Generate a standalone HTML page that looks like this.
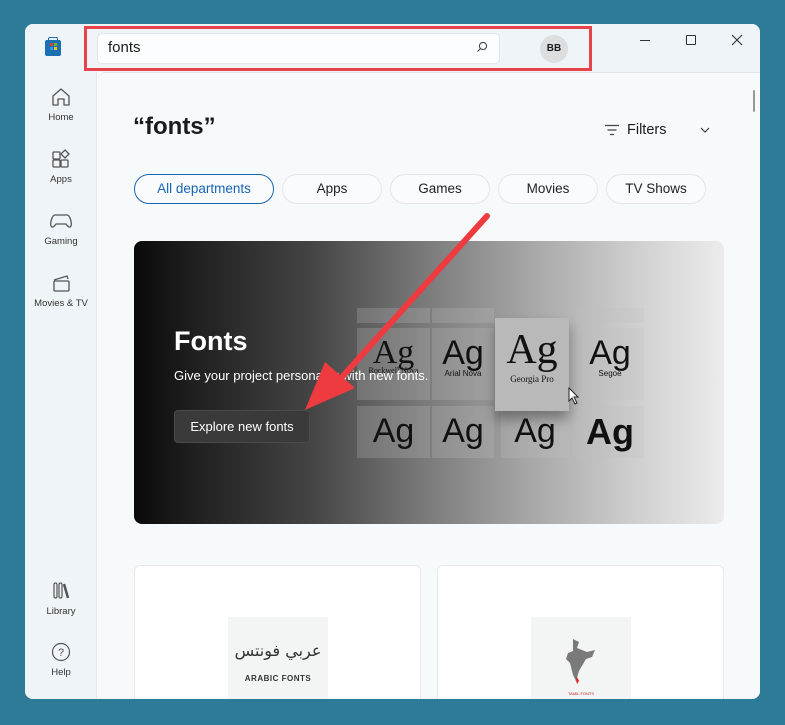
<!DOCTYPE html>
<html><head><meta charset="utf-8"><style>
*{margin:0;padding:0;box-sizing:border-box}
body{width:785px;height:725px;background:#2e7b98;position:relative;overflow:hidden;font-family:"Liberation Sans",sans-serif;color:#1b1b1b}
.win{position:absolute;left:25px;top:24px;width:735px;height:675px;background:#f7fafb;border-radius:8px;overflow:hidden}
.top{position:absolute;left:0;top:0;width:735px;height:48px;background:#eef4f7}
.side{position:absolute;left:0;top:48px;width:72px;height:627px;background:#eef4f7;border-right:1px solid #e3e8eb}
.content{position:absolute;left:73px;top:48px;right:0;bottom:0;background:#f7fafb;border-top:1px solid #e0e5e8;border-top-left-radius:8px}
.nav{position:absolute;width:72px;text-align:center;font-size:9.5px;color:#333}
.nav svg{display:block;margin:0 auto 4px}
.abs{position:absolute}
.pill{position:absolute;top:174px;height:30px;border:1px solid #e2e6e8;border-radius:15px;font-size:13.5px;text-align:center;line-height:28px;background:#f9fbfc;color:#222}
.tile{position:absolute;background:rgba(190,190,190,.25);font-family:"Liberation Sans",sans-serif;color:#111;text-align:center}
.clip{position:absolute;left:25px;top:24px;width:735px;height:675px;overflow:hidden;border-radius:8px}
</style></head><body>
<div class="win">
 <div class="top"></div>
 <div class="side"></div>
 <div class="content"></div>
</div>
<div class="abs" style="left:45px;top:40px;width:16px;height:16px;background:#1d6fb3;border-radius:2px"></div>
<div class="abs" style="left:48px;top:37px;width:10px;height:4px;border:1.5px solid #1d6fb3;border-bottom:none;border-radius:2px 2px 0 0"></div>
<div class="abs" style="left:50px;top:43px;width:3px;height:3px;background:#e83a2a"></div>
<div class="abs" style="left:54px;top:43px;width:3px;height:3px;background:#6cb62e"></div>
<div class="abs" style="left:50px;top:47px;width:3px;height:3px;background:#2b9ee8"></div>
<div class="abs" style="left:54px;top:47px;width:3px;height:3px;background:#f4c01e"></div>
<div class="abs" style="left:97px;top:33px;width:403px;height:31px;background:#fbfdfe;border:1px solid #e2e6e8;border-radius:5px"></div>
<div class="abs" style="left:108px;top:39px;font-size:15px">fonts</div>
<svg class="abs" style="left:476px;top:41px" width="12" height="12" viewBox="0 0 12 12"><circle cx="7" cy="5" r="3.6" fill="none" stroke="#444" stroke-width="1.1"/><path d="M4.4 7.6 1.5 10.5" stroke="#444" stroke-width="1.1"/></svg>
<div class="abs" style="left:540px;top:35px;width:28px;height:28px;border-radius:50%;background:#dcdedf;font-size:10px;font-weight:bold;text-align:center;line-height:28px">BB</div>
<div class="abs" style="left:84px;top:26px;width:508px;height:45px;border:3px solid #e8434b"></div>
<div class="abs" style="left:640px;top:40px;width:10px;height:1px;background:#333"></div>
<div class="abs" style="left:686px;top:35px;width:10px;height:10px;border:1.2px solid #333;border-radius:1px"></div>
<svg class="abs" style="left:731px;top:34px" width="12" height="12"><path d="M1 1 11 11M11 1 1 11" stroke="#333" stroke-width="1.1"/></svg>
<div class="abs" style="left:753px;top:90px;width:2px;height:22px;background:#999;border-radius:1px"></div>
<div class="nav" style="left:25px;top:86px"><svg width="22" height="22" viewBox="0 0 22 22"><path d="M3 10 11 3l8 7v9h-5v-6H8v6H3z" fill="none" stroke="#555" stroke-width="1.3" stroke-linejoin="round"/></svg>Home</div>
<div class="nav" style="left:25px;top:148px"><svg width="22" height="22" viewBox="0 0 22 22"><rect x="3" y="4" width="7" height="7" rx="1" fill="none" stroke="#555" stroke-width="1.3"/><rect x="3" y="12" width="7" height="7" rx="1" fill="none" stroke="#555" stroke-width="1.3"/><rect x="11" y="12" width="7" height="7" rx="1" fill="none" stroke="#555" stroke-width="1.3"/><path d="M15 2l4 4-4 4-4-4z" fill="none" stroke="#555" stroke-width="1.3"/></svg>Apps</div>
<div class="nav" style="left:25px;top:210px"><svg width="24" height="22" viewBox="0 0 24 22"><path d="M6 5h12c3 0 5 8 4 11-1 2-3 1-5-2H7c-2 3-4 4-5 2C1 13 3 5 6 5z" fill="none" stroke="#555" stroke-width="1.3"/></svg>Gaming</div>
<div class="nav" style="left:25px;top:272px"><svg width="22" height="22" viewBox="0 0 22 22"><rect x="4" y="9" width="15" height="10" rx="1" fill="none" stroke="#555" stroke-width="1.3"/><path d="M4 8 17 4l1 3" fill="none" stroke="#555" stroke-width="1.3"/></svg>Movies &amp; TV</div>
<div class="nav" style="left:25px;top:580px"><svg width="22" height="22" viewBox="0 0 22 22"><rect x="4" y="3" width="3" height="15" rx="1.5" fill="none" stroke="#555" stroke-width="1.2"/><rect x="9" y="3" width="3" height="15" rx="1.5" fill="none" stroke="#555" stroke-width="1.2"/><path d="M14 4l4 14" stroke="#555" stroke-width="2.5"/></svg>Library</div>
<div class="nav" style="left:25px;top:641px"><svg width="22" height="22" viewBox="0 0 22 22"><circle cx="11" cy="11" r="8.5" fill="none" stroke="#555" stroke-width="1.2"/><text x="11" y="15" font-size="11" text-anchor="middle" fill="#555" font-family="Liberation Sans">?</text></svg>Help</div>
<div class="abs" style="left:133px;top:113px;font-size:24px;font-weight:bold;color:#1b1b1b">“fonts”</div>
<svg class="abs" style="left:604px;top:124px" width="16" height="12"><path d="M1 1.5h14M3.5 6h9M6 10.5h4" stroke="#444" stroke-width="1.2"/></svg>
<div class="abs" style="left:627px;top:122px;font-size:14.5px">Filters</div>
<svg class="abs" style="left:700px;top:127px" width="10" height="6"><path d="M1 1l4 4 4-4" fill="none" stroke="#444" stroke-width="1.2"/></svg>
<div class="pill" style="left:134px;width:140px;border-color:#1a64b5;color:#1a64b5">All departments</div>
<div class="pill" style="left:282px;width:100px">Apps</div>
<div class="pill" style="left:390px;width:100px">Games</div>
<div class="pill" style="left:498px;width:100px">Movies</div>
<div class="pill" style="left:606px;width:100px">TV Shows</div>
<div class="abs" style="left:134px;top:241px;width:590px;height:283px;border-radius:8px;overflow:hidden;background:linear-gradient(90deg,#0a0a0a 0%,#1f1f1f 10%,#444 30%,#7c7c7c 50%,#a9a9a9 68%,#cfcfcf 85%,#ececec 100%)">
 <div class="tile" style="left:223px;top:67px;width:73px;height:15px"></div>
 <div class="tile" style="left:298px;top:67px;width:62px;height:15px"></div>
 <div class="tile" style="left:442px;top:67px;width:68px;height:15px"></div>
 <div class="tile" style="left:223px;top:87px;width:73px;height:72px;font-family:'Liberation Serif',serif;font-size:34px;padding-top:6px">Ag<div style="font-size:8px;margin-top:-6px">Rockwell Nova</div></div>
 <div class="tile" style="left:298px;top:87px;width:62px;height:72px;font-size:34px;padding-top:6px">Ag<div style="font-size:8px;margin-top:-4px">Arial Nova</div></div>
 <div class="tile" style="left:442px;top:87px;width:68px;height:72px;font-size:34px;padding-top:6px">Ag<div style="font-size:8px;margin-top:-4px">Segoe</div></div>
 <div class="tile" style="left:223px;top:165px;width:73px;height:52px;font-size:34px;padding-top:6px">Ag</div>
 <div class="tile" style="left:298px;top:165px;width:62px;height:52px;font-size:34px;padding-top:6px">Ag</div>
 <div class="tile" style="left:367px;top:165px;width:68px;height:52px;font-size:34px;padding-top:6px">Ag</div>
 <div class="tile" style="left:442px;top:165px;width:68px;height:52px;font-size:36px;font-weight:bold;padding-top:5px">Ag</div>
 <div class="tile" style="left:361px;top:77px;width:74px;height:93px;background:#b9b9b9;box-shadow:0 8px 12px rgba(0,0,0,.35);font-family:'Liberation Serif',serif;font-size:42px;padding-top:8px">Ag<div style="font-size:9px;margin-top:0">Georgia Pro</div></div>
 <svg class="abs" style="left:434px;top:146px" width="14" height="18"><path d="M1 1v13l3-3 3 6 2-1-3-6h4z" fill="#fff" stroke="#222" stroke-width="1"/></svg>
 <div class="abs" style="left:40px;top:85px;font-size:27px;font-weight:bold;color:#fff">Fonts</div>
 <div class="abs" style="left:40px;top:127px;font-size:13px;color:#fff">Give your project personality with new fonts.</div>
 <div class="abs" style="left:40px;top:169px;width:136px;height:33px;background:#3a3a3a;border:1px solid #4a4a4a;border-radius:4px;font-size:13px;color:#fff;text-align:center;line-height:31px">Explore new fonts</div>
</div>
<svg class="abs" style="left:0;top:0" width="785" height="725"><path d="M487 216 343 376" stroke="#ee3b3f" stroke-width="6" stroke-linecap="round"/><path d="M305 410 325 362 355 388z" fill="#ee3b3f"/></svg>
<div class="clip">
 <div class="abs" style="left:109px;top:541px;width:287px;height:150px;background:#fff;border:1px solid #e6eaec;border-radius:6px"></div>
 <div class="abs" style="left:412px;top:541px;width:287px;height:150px;background:#fff;border:1px solid #e6eaec;border-radius:6px"></div>
 <div class="abs" style="left:203px;top:593px;width:100px;height:90px;background:#f3f4f4;text-align:center">
  <div style="font-family:'DejaVu Sans',sans-serif;font-size:16px;color:#333;margin-top:24px;white-space:nowrap">عربي فونتس</div>
  <div style="font-size:8px;font-weight:bold;color:#333;margin-top:14px;letter-spacing:.5px;white-space:nowrap">ARABIC FONTS</div>
 </div>
 <div class="abs" style="left:506px;top:593px;width:100px;height:90px;background:#f3f4f4">
  <svg class="abs" style="left:28px;top:20px" width="40" height="50"><path d="M14 2l6 3-2 6 10 4 8 -2-3 7-6 2-7 12-3 10-3-6-3-12-4-4 2-6 5-2z" fill="#7a7a7a"/><path d="M18 40l2 4-2 3-1-4z" fill="#d22"/></svg>
  <div class="abs" style="left:0;top:74px;width:100px;text-align:center;font-size:4px;color:#c22">TAMIL FONTS</div>
 </div>
</div>
</body></html>
